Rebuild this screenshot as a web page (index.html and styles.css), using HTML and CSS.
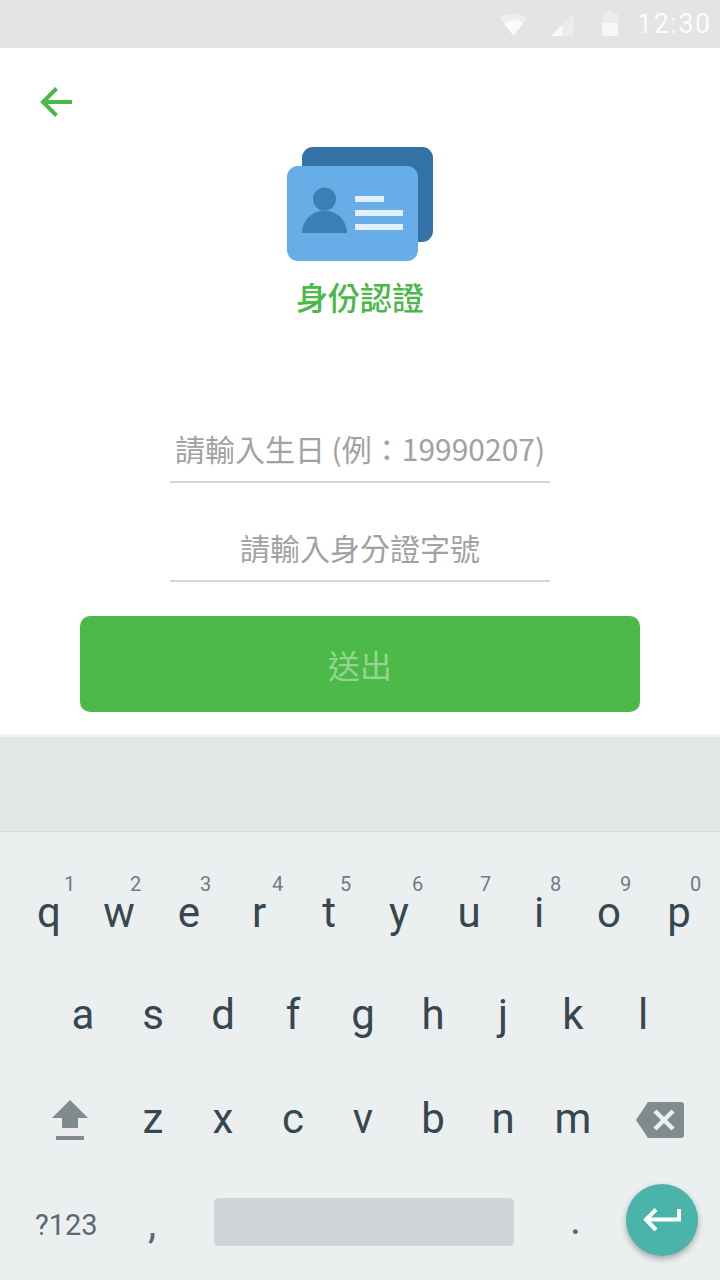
FILE: index.html
```html
<!DOCTYPE html>
<html lang="zh-Hant">
<head>
    <meta charset="UTF-8">
    <title>身份認證</title>
    <link rel="stylesheet" href="styles.css">
</head>
<body>

    <div class="status-bar">
        <svg class="wifi" width="27" height="24" viewBox="0 0 27 24"><path d="M0 6 Q13.500 -3 27 6 L13.500 24 Z" fill="#fff" fill-opacity=".4"/><path d="M4 11.500 Q13.500 4.500 23 11.500 L13.500 24 Z" fill="#fff" fill-opacity=".7"/></svg>
        <svg class="signal" width="24" height="24" viewBox="0 0 24 24"><path d="M0 24 L23 1 V24 Z" fill="#fff" fill-opacity=".3"/><path d="M0 24 L11 13 V24 Z" fill="#fff" fill-opacity=".7"/></svg>
        <svg class="battery" width="16" height="26" viewBox="0 0 16 26"><path d="M1.500 3 H5 V0.500 H11 V3 H14.500 Q16 3 16 4.500 V13 H0 V4.500 Q0 3 1.500 3 Z" fill="#fff" fill-opacity=".3"/><path d="M0 13 H16 V24.500 Q16 26 14.500 26 H1.500 Q0 26 0 24.500 Z" fill="#fff" fill-opacity=".7"/></svg>
        <span class="clock">12:30</span>
    </div>

    <div class="page">
        <svg class="back" width="34" height="34" viewBox="0 0 34 34"><path d="M33 16 H4 M17.500 2.500 L4 16 L17.500 29.500" fill="none" stroke="#4cb848" stroke-width="4"/></svg>

        <svg class="card-icon" width="146" height="114" viewBox="0 0 146 114">
            <rect x="15" width="131" height="95" rx="11" fill="#3372a6"/>
            <rect y="19" width="131" height="95" rx="11" fill="#67ade8"/>
            <circle cx="37.500" cy="52" r="11.500" fill="#3c7fb7"/>
            <path d="M15 86 A22.500 22.500 0 0 1 60 86 Z" fill="#3c7fb7"/>
            <rect x="68" y="49" width="29" height="6" fill="#e1f0fc"/>
            <rect x="68" y="63" width="48" height="6" fill="#e1f0fc"/>
            <rect x="68" y="77" width="48" height="6" fill="#e1f0fc"/>
        </svg>
        <h1>身份認證</h1>

        <form class="form">
            <input class="field" type="text" placeholder="請輸入生日 (例：19990207)">
            <input class="field" type="text" placeholder="請輸入身分證字號">
            <button class="submit" type="button">送出</button>
        </form>
    </div>

    <div class="suggestions"></div>

    <div class="keyboard">
        <div class="row row-top">
            <span class="key">q<sup>1</sup></span>
            <span class="key">w<sup>2</sup></span>
            <span class="key">e<sup>3</sup></span>
            <span class="key">r<sup>4</sup></span>
            <span class="key">t<sup>5</sup></span>
            <span class="key">y<sup>6</sup></span>
            <span class="key">u<sup>7</sup></span>
            <span class="key">i<sup>8</sup></span>
            <span class="key">o<sup>9</sup></span>
            <span class="key">p<sup>0</sup></span>
        </div>
        <div class="row row-home">
            <span class="key">a</span>
            <span class="key">s</span>
            <span class="key">d</span>
            <span class="key">f</span>
            <span class="key">g</span>
            <span class="key">h</span>
            <span class="key">j</span>
            <span class="key">k</span>
            <span class="key">l</span>
        </div>
        <div class="row row-shift">
            <span class="key">
                <svg class="key-icon" width="36" height="40" viewBox="0 0 36 40"><path d="M18 0 L36 18 H26 V28 H10 V18 H0 Z M4 36 H32 V40 H4 Z" fill="#7f8b8f"/></svg>
            </span>
            <span class="key">z</span>
            <span class="key">x</span>
            <span class="key">c</span>
            <span class="key">v</span>
            <span class="key">b</span>
            <span class="key">n</span>
            <span class="key">m</span>
            <span class="key">
                <svg class="key-icon" width="48" height="36" viewBox="0 0 48 36"><path d="M12 0 H45 Q48 0 48 3 V33 Q48 36 45 36 H12 L0 18 Z" fill="#7f8b8f"/><path d="M19 9 L37 27 M37 9 L19 27" stroke="#ebeff0" stroke-width="4.500"/></svg>
            </span>
        </div>
        <div class="row row-bottom">
            <span class="sym">?123</span>
            <span class="comma">,</span>
            <span class="space"></span>
            <span class="period">.</span>
        </div>
        <div class="enter">
            <svg width="38" height="26" viewBox="0 0 38 26"><path d="M36 2 V12.500 H4 M13 2.500 L3 12.500 L13 23" fill="none" stroke="#fff" stroke-width="4"/></svg>
        </div>
    </div>

</body>
</html>
```

FILE: styles.css
```css
* {
    box-sizing: border-box;
}
body {
    font-family: "Noto Sans CJK TC", "Noto Sans", sans-serif;
    background-color: #fff;
    margin: 0;
    width: 720px;
    height: 1280px;
    overflow: hidden;
}
.status-bar {
    height: 48px;
    background-color: #e4e4e4;
    display: flex;
    align-items: center;
    padding-left: 500px;
}
.signal {
    margin-left: 24px;
}
.battery {
    margin-left: 27px;
    margin-bottom: 2px;
}
.clock {
    margin-left: 19px;
    font-family: Roboto, sans-serif;
    font-size: 27px;
    letter-spacing: 1.500px;
    color: #fbfbfb;
}

.page {
    position: relative;
    height: 686px;
    padding-top: 99px;
    display: flex;
    flex-direction: column;
    align-items: center;
}
.back {
    position: absolute;
    left: 39px;
    top: 38px;
}
.card-icon {
    display: block;
}
h1 {
    margin: 13px 0 0;
    font-size: 32px;
    font-weight: 500;
    line-height: 44px;
    color: #4cb848;
}
.form {
    margin-top: 91px;
    display: flex;
    flex-direction: column;
    align-items: center;
}
.field {
    display: block;
    width: 380px;
    height: 74px;
    padding: 6px 0 0;
    margin-bottom: 25px;
    border: 0;
    border-bottom: 2px solid #d6d6d6;
    outline: none;
    background: none;
    font-family: inherit;
    font-size: 30px;
    text-align: center;
}
.field::placeholder {
    color: #a2a2a2;
    opacity: 1;
}
.submit {
    width: 560px;
    height: 96px;
    margin-top: 9px;
    border: none;
    border-radius: 10px;
    background-color: #4cb948;
    color: #93d690;
    font-family: inherit;
    font-size: 32px;
}

.suggestions {
    height: 98px;
    background-color: #e2e6e7;
    border-top: 3px solid #f0f2f3;
    border-bottom: 1px solid #d5d9db;
}
.keyboard {
    position: relative;
    height: 448px;
    background-color: #ebeff0;
    color: #37474f;
    font-family: Roboto, sans-serif;
    font-size: 42px;
    padding-top: 30px;
}
.row {
    display: grid;
    grid-template-columns: repeat(auto-fill, 70px);
    height: 102px;
    align-items: center;
}
.row-top {
    padding-left: 14px;
}
.row-home {
    padding-left: 48px;
}
.row-shift {
    padding-left: 22px;
    grid-template-columns: 96px repeat(7, 70px) 104px;
    height: 106px;
}
.key {
    position: relative;
    display: flex;
    justify-content: center;
    align-items: center;
    line-height: 1;
}
.key-icon {
    margin-top: 2px;
}
.key sup {
    position: absolute;
    left: 46px;
    top: -18px;
    font-size: 20px;
    line-height: 1;
    color: #6d7d85;
}
.key:first-child sup {
    left: 50px;
}
.key:nth-child(4) sup,
.key:nth-child(6) sup {
    left: 48px;
}
.row-bottom {
    display: block;
    position: relative;
    height: 102px;
}
.sym {
    position: absolute;
    left: 35px;
    top: 36px;
    font-size: 29px;
    line-height: 34px;
    color: #5a6a72;
}
.comma {
    position: absolute;
    left: 148px;
    top: 28px;
    font-size: 42px;
    line-height: 48px;
    color: #5a6a72;
}
.space {
    position: absolute;
    left: 214px;
    top: 26px;
    width: 300px;
    height: 48px;
    border-radius: 5px;
    background-color: #cfd4d7;
}
.period {
    position: absolute;
    left: 570px;
    top: 24px;
    font-size: 42px;
    line-height: 48px;
    color: #5a6a72;
}
.enter {
    position: absolute;
    left: 626px;
    top: 352px;
    width: 72px;
    height: 72px;
    border-radius: 50%;
    background-color: #4bb4aa;
    box-shadow: 0 3px 6px rgba(0,0,0,0.3);
    display: flex;
    justify-content: center;
    align-items: center;
}
```
